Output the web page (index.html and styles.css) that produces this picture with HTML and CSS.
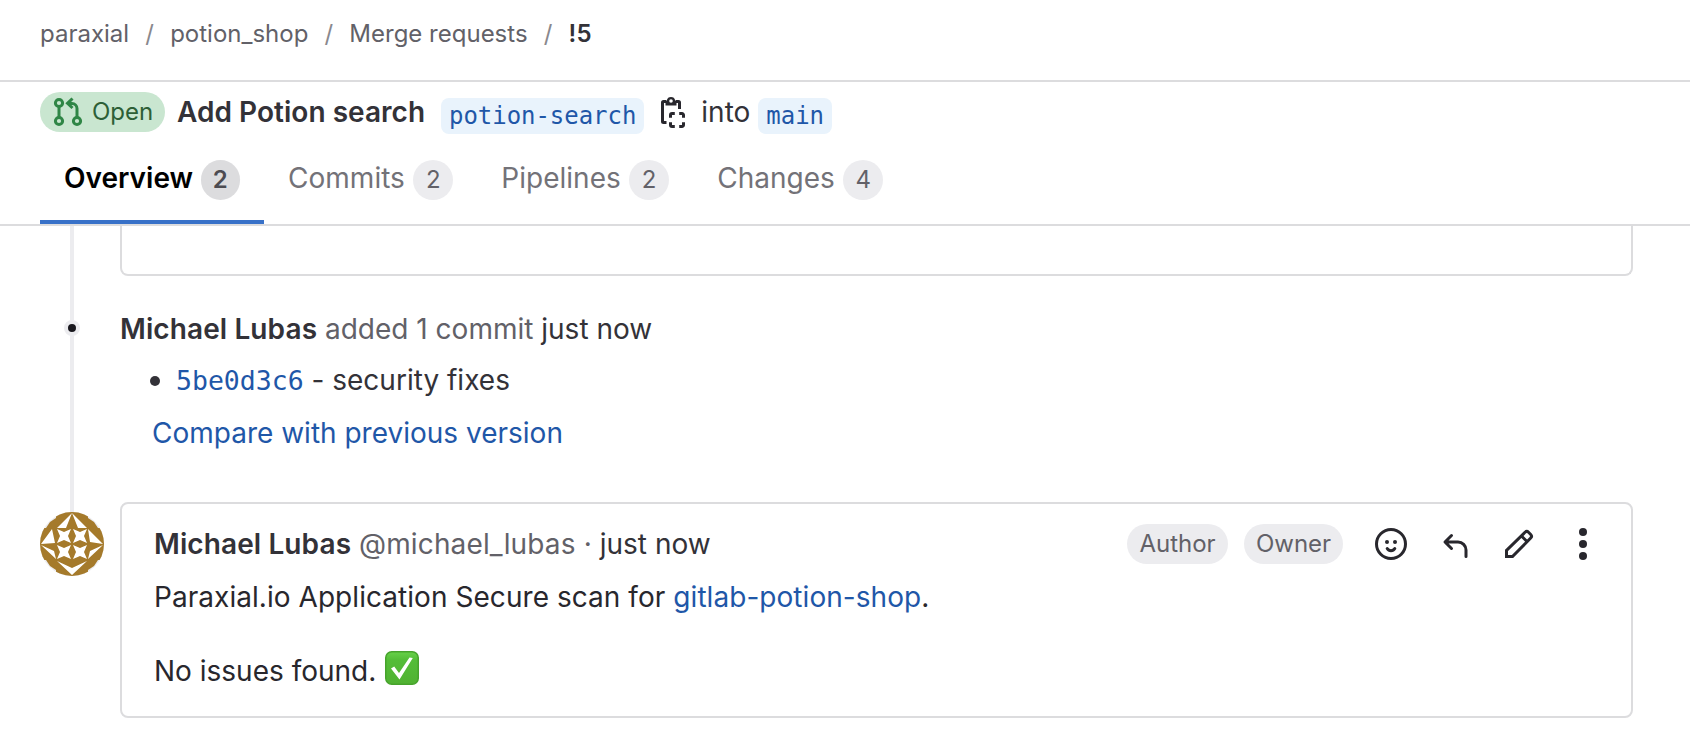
FILE: index.html
```html
<!DOCTYPE html>
<html lang="en">
<head>
<meta charset="utf-8">
<title>Add Potion search (!5)</title>
<link rel="stylesheet" href="styles.css">
</head>
<body>
<nav class="breadcrumbs">
  <a>paraxial</a><span class="sep">/</span><a>potion_shop</a><span class="sep">/</span><a>Merge requests</a><span class="sep">/</span><strong>!5</strong>
</nav>
<header class="mr-header">
  <div class="title-row">
    <span class="status">
      <svg width="32" height="32" viewBox="0 0 32 32" fill="none" stroke="#2f8646" stroke-width="3">
        <circle cx="7" cy="7" r="3.6"/><circle cx="7" cy="25" r="3.6"/><circle cx="25" cy="25" r="3.6"/>
        <path d="M7 10.500v11M25 21.500V12.500a5 5 0 0 0-5-5h-3"/><path d="M20.500 2.500L15.500 7.300l5 4.700"/>
      </svg>
      <span>Open</span>
    </span>
    <h1>Add Potion search</h1>
    <code class="branch">potion-search</code>
    <svg class="copy" width="32" height="32" viewBox="0 0 32 32" fill="none" stroke="#28272d" stroke-width="3">
      <path d="M9.500 26.500H6.500a1 1 0 0 1-1-1V6.500a1 1 0 0 1 1-1H9M19 5.500h2.500a1 1 0 0 1 1 1V13"/>
      <path d="M8.500 9.500V4.500h1.300a4.300 4.300 0 0 1 8.400 0h1.300v5z" fill="#28272d" stroke="none"/>
      <circle cx="14" cy="5" r="1.800" fill="#fff" stroke="none"/>
      <path d="M13.500 21.800V19a1.500 1.500 0 0 1 1.500-1.500h2.800M22.200 17.500H25a1.500 1.500 0 0 1 1.500 1.500v2.800M26.500 26.200V29a1.500 1.500 0 0 1-1.500 1.500h-2.800M17.800 30.500H15a1.500 1.500 0 0 1-1.500-1.500v-2.800"/>
    </svg>
    <span class="into">into</span>
    <code class="branch">main</code>
  </div>
  <div class="tabs">
    <a class="tab active">Overview<b class="count">2</b></a>
    <a class="tab">Commits<b class="count">2</b></a>
    <a class="tab">Pipelines<b class="count">2</b></a>
    <a class="tab">Changes<b class="count">4</b></a>
  </div>
</header>
<main class="timeline">
  <div class="rail"></div>
  <section class="card-tail"></section>
  <section class="system-note">
    <i class="dot"></i>
    <p><strong>Michael Lubas</strong> <span class="muted">added 1 commit</span> just now</p>
    <ul><li><a class="sha">5be0d3c6</a> - security fixes</li></ul>
    <a class="compare">Compare with previous version</a>
  </section>
  <section class="comment">
    <svg class="avatar" width="64" height="64" viewBox="0 0 64 64">
      <defs>
        <clipPath id="round"><circle cx="32" cy="32" r="32"/></clipPath>
        <path id="star" d="M1 1L8 4 15 1 12 8 15 15 8 12 1 15 4 8z"/>
      </defs>
      <circle cx="32" cy="32" r="31" fill="#fff" stroke="#ececef" stroke-width="2"/>
      <g clip-path="url(#round)">
        <path d="M16 0H48V6L54 10 58 16H64V48H58L54 54 48 58V64H16V58L10 54 6 48H0V16H6L10 10 16 6z" fill="#a57a2b"/>
        <g fill="#fff">
          <path d="M32 1L17 16h9zM32 1l15 15h-9z"/>
          <path d="M1 32L12 17l3 14zM63 32L48 17l2 13z"/>
          <path d="M1 33l15 14-2-8zM63 33L48 47l2-8z"/>
          <path d="M17 49l15 7 15-7-15 14z"/>
          <use href="#star" x="16" y="16"/><use href="#star" x="32" y="16"/><use href="#star" x="16" y="32"/><use href="#star" x="32" y="32"/>
        </g>
      </g>
    </svg>
    <article class="card">
      <div class="note-head">
        <p><strong>Michael Lubas</strong> <span class="muted handle">@michael_lubas ·</span> just now</p>
        <div class="actions">
          <span class="pill author">Author</span><span class="pill owner">Owner</span>
          <svg class="smile" width="32" height="32" viewBox="0 0 32 32" fill="none" stroke="#28272d" stroke-width="3"><circle cx="16" cy="16" r="14.500"/><circle cx="12" cy="14" r="2" fill="#28272d" stroke="none"/><circle cx="20" cy="14" r="2" fill="#28272d" stroke="none"/><path d="M12.200 20.500a4.400 4.400 0 0 0 7.600 0" stroke-linecap="round"/></svg>
          <svg class="reply" width="32" height="32" viewBox="0 0 32 32" fill="none" stroke="#28272d" stroke-width="3" stroke-linecap="round" stroke-linejoin="round"><path d="M12.500 7.500L6 14l6.500 6.500M6.500 14H19a8 8 0 0 1 8 8v6.500"/></svg>
          <svg class="pencil" width="32" height="32" viewBox="0 0 32 32" fill="none" stroke="#28272d" stroke-width="3"><path d="M3.500 28.500v-6L22 4.300a2.500 2.500 0 0 1 3.500 0l2.200 2.200a2.500 2.500 0 0 1 0 3.500L9.500 28.500zM18.500 8l5.500 5.500"/></svg>
          <svg width="32" height="32" viewBox="0 0 32 32" fill="#28272d"><circle cx="16" cy="4" r="4"/><circle cx="16" cy="16" r="4"/><circle cx="16" cy="28" r="4"/></svg>
        </div>
      </div>
      <p class="body-text scan">Paraxial.io Application Secure scan for <a>gitlab-potion-shop</a>.</p>
      <p class="body-text result"><span>No issues found.</span>
        <svg width="34" height="34" viewBox="0 0 34 34"><defs><linearGradient id="green" x2="0" y2="1"><stop offset="0" stop-color="#67d149"/><stop offset=".25" stop-color="#54bd38"/><stop offset="1" stop-color="#50b232"/></linearGradient></defs><rect x=".75" y=".75" width="32.500" height="32.500" rx="6" fill="url(#green)" stroke="#46a32c" stroke-width="1.500"/><path d="M6 17.500l3.200-2 4.800 6.500L24.500 6.500l3.300.5L14.500 28.500z" fill="#fff"/></svg>
      </p>
    </article>
  </section>
</main>
</body>
</html>
```
FILE: styles.css
```css
* { box-sizing: border-box; }
body { margin: 0; height: 740px; overflow: hidden; background: #fff; color: #333238; font: 28px/40px Inter, "Liberation Sans", sans-serif; }
p, h1, ul { margin: 0; padding: 0; font-size: 28px; line-height: 40px; font-weight: 400; }
strong { font-weight: 600; letter-spacing: .1px; }
a { color: #1f57a8; text-decoration: none; }
svg { display: block; flex: none; }
code, .sha { font-family: "DejaVu Sans Mono", "Liberation Mono", monospace; }
.muted { color: #626168; }
.handle { letter-spacing: .14px; }
.breadcrumbs { height: 82px; padding: 14px 40px 0; border-bottom: 2px solid #dcdcde; display: flex; font-size: 24px; color: #89888d; }
.breadcrumbs a { color: #626168; }
.breadcrumbs strong { color: #333238; }
.sep { width: 41px; text-align: center; }
.mr-header { height: 144px; border-bottom: 2px solid #dcdcde; }
.title-row { height: 62px; padding: 10px 40px 0; display: flex; }
.status { width: 125px; height: 40px; border-radius: 20px; background: #c9e6d0; color: #2d5f36; display: flex; align-items: center; padding-left: 12px; gap: 8px; font-size: 24px; }
h1 { margin: 0 0 0 12px; width: 264px; font-weight: 600; white-space: nowrap; letter-spacing: .03px; }
.branch { margin-top: 6px; height: 36px; line-height: 36px; padding: 0 8px; border-radius: 8px; background: #e9f3fc; color: #1f57a8; font-size: 24px; letter-spacing: -.04px; }
.copy { margin: 4px 12px 0 13px; }
.into { width: 57px; }
.tabs { height: 80px; padding-left: 40px; display: flex; }
.tab { padding: 14px 24px 0; display: flex; gap: 8.4px; color: #737278; letter-spacing: .02px; }
.tab.active { width: 224px; gap: 7.5px; color: #000; font-weight: 600; border-bottom: 4px solid #3871c8; }
.count { width: 40px; height: 40px; margin-top: 2px; border-radius: 20px; background: #ececef; color: #626168; text-align: center; font-size: 24px; font-weight: 400; }
.active .count { background: #dcdcde; color: #4c4b51; font-weight: 600; }
.timeline { position: relative; padding: 0 57px 0 40px; height: 514px; }
.rail { position: absolute; left: 70px; top: 0; width: 4px; height: 290px; background: #ececef; }
.card-tail { margin-left: 80px; height: 50px; border: 2px solid #dcdcde; border-top: 0; border-radius: 0 0 8px 8px; }
.system-note { position: relative; height: 226px; padding: 33px 0 0 80px; }
.dot { position: absolute; left: 24px; top: 44px; width: 16px; height: 16px; border: 4px solid #ececef; border-radius: 50%; background: #18171d; }
ul { list-style: none; padding: 11px 0 0 56px; }
li { display: block; }
li::before { content: ""; float: left; width: 10px; height: 10px; margin: 16px 0 0 -26px; border-radius: 50%; background: #333238; }
.sha { font-size: 26.5px; line-height: 30px; }
.compare { display: block; margin: 13px 0 0 32px; }
.comment { display: flex; gap: 16px; }
.avatar { margin-top: 10px; position: relative; }
.card { flex: 1; height: 216px; border: 2px solid #dcdcde; border-radius: 8px; padding: 20px 32px; color: #28272d; }
.note-head { display: flex; justify-content: space-between; color: #333238; height: 53px; }
.actions { display: flex; align-items: center; height: 40px; }
.pill { height: 40px; border-radius: 20px; background: #ececef; color: #626168; font-size: 24px; text-align: center; margin-right: 16px; }
.author { width: 101px; }
.owner { width: 99px; }
.smile { margin: 0 32px 0 16px; }
.reply, .pencil { margin-right: 32px; }
.body-text { height: 74px; }
.scan { letter-spacing: .05px; }
.result { display: flex; gap: 9px; }
```
